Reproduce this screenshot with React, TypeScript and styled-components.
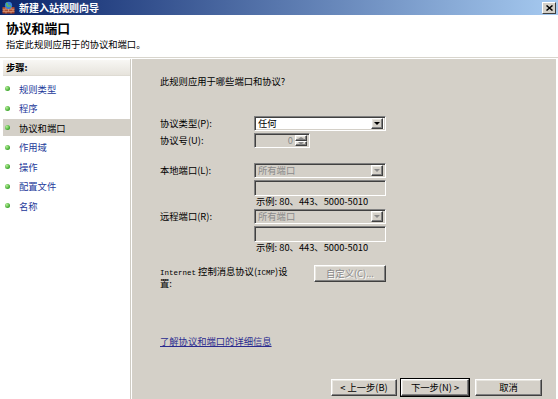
import React from 'react';
import styled, { createGlobalStyle, css } from 'styled-components';

const GlobalStyle = createGlobalStyle`
  html, body {
    margin: 0;
    padding: 0;
    background: #fff;
  }
  body {
    font-family: "Noto Sans CJK SC", "Liberation Sans", sans-serif;
    font-size: 9.3px;
    color: #000;
  }
`;

const Window = styled.div`
  width: 558px;
  height: 399px;
  display: flex;
  flex-direction: column;
  background: #fff;
  overflow: hidden;
`;

const TitleBar = styled.div`
  height: 15px;
  flex: none;
  display: flex;
  align-items: center;
  gap: 4px;
  padding: 0 2px 0 2px;
  background: linear-gradient(to right, #0a246a, #a6caf0);
  color: #fff;
  font-weight: bold;
  font-size: 10px;
  line-height: 15px;
`;

const TitleText = styled.span`
  flex: 1;
`;

const CloseBox = styled.div`
  width: 12px;
  height: 10px;
  background: #d4d0c8;
  border: 1px solid;
  border-color: #fff #404040 #404040 #fff;
  display: flex;
  align-items: center;
  justify-content: center;
`;

const Header = styled.div`
  height: 43px;
  flex: none;
  padding: 5px 6px 0;
  box-sizing: border-box;
  border-bottom: 1px solid #d8d5cd;
`;

const Heading = styled.div`
  font-size: 12.8px;
  font-weight: bold;
  line-height: 15px;
`;

const SubHeading = styled.div`
  margin-top: 4px;
  line-height: 11px;
`;

const Body = styled.div`
  flex: 1;
  display: flex;
  padding-top: 1px;
  min-height: 0;
`;

const StepsPanel = styled.div`
  width: 127px;
  flex: none;
  padding: 1px 0 0 3px;
  border-right: 1px solid #cfccc4;
  margin-right: 1px;
  display: flex;
  flex-direction: column;
`;

const StepsHeader = styled.div`
  height: 15px;
  line-height: 15px;
  padding-left: 3px;
  font-weight: bold;
  background: linear-gradient(to bottom, #f8f7f4, #e6e3dc);
  border-bottom: 1px solid #dedbd3;
`;

const StepList = styled.div`
  padding-top: 4px;
  display: flex;
  flex-direction: column;
  gap: 2.5px;
`;

const StepItem = styled.div<{ $active?: boolean }>`
  height: 17px;
  display: flex;
  align-items: center;
  gap: 9px;
  padding-left: 2px;
  color: ${(p) => (p.$active ? '#000' : '#23399a')};
  background: ${(p) => (p.$active ? '#d4d0c8' : 'transparent')};
`;

const Bullet = styled.span`
  width: 5px;
  height: 5px;
  border-radius: 50%;
  background: radial-gradient(circle at 35% 35%, #b8f09a, #3aa52a 70%);
`;

const MainPanel = styled.div`
  flex: 1;
  background: #d4d0c8;
  margin-right: 2px;
  display: flex;
  flex-direction: column;
  padding: 16px 14px 3px 28px;
`;

const Question = styled.div`
  line-height: 12px;
`;

const FieldRow = styled.div<{ $mt: number }>`
  display: flex;
  align-items: flex-start;
  margin-top: ${(p) => p.$mt}px;
  width: 226px;
`;

const FieldLabel = styled.div`
  width: 94px;
  line-height: 15px;
  flex: none;
`;

const ControlCol = styled.div`
  width: 132px;
  display: flex;
  flex-direction: column;
`;

const sunken = css`
  box-sizing: border-box;
  border: 1px solid;
  border-color: #808080 #fff #fff #808080;
  box-shadow: inset 1px 1px #404040, inset -1px -1px #d4d0c8;
`;

const raised = css`
  box-sizing: border-box;
  border: 1px solid;
  border-color: #fff #404040 #404040 #fff;
  box-shadow: inset -1px -1px #808080, inset 1px 1px #e8e6e0;
  background: #d4d0c8;
`;

const Combo = styled.div<{ $disabled?: boolean }>`
  ${sunken};
  height: 15px;
  width: 132px;
  display: flex;
  align-items: center;
  padding: 2px 2px 2px 3px;
  background: ${(p) => (p.$disabled ? '#d4d0c8' : '#fff')};
  color: ${(p) => (p.$disabled ? '#8a8a8a' : '#000')};
  line-height: 11px;
`;

const ComboText = styled.span`
  flex: 1;
`;

const ComboButton = styled.div`
  ${raised};
  width: 12px;
  height: 11px;
  display: flex;
  align-items: center;
  justify-content: center;
`;

const Arrow = styled.span<{ $disabled?: boolean; $up?: boolean }>`
  width: 0;
  height: 0;
  border-left: 3px solid transparent;
  border-right: 3px solid transparent;
  ${(p) =>
    p.$up
      ? css`border-bottom: 2px solid ${p.$disabled ? '#8a8a8a' : '#000'};`
      : css`border-top: 3px solid ${p.$disabled ? '#8a8a8a' : '#000'};`}
`;

const TextBox = styled.div`
  ${sunken};
  height: 16px;
  width: 132px;
  margin-top: 2px;
  background: #d4d0c8;
`;

const Hint = styled.div`
  line-height: 11px;
  padding-left: 2px;
`;

const Spin = styled.div`
  ${sunken};
  width: 56px;
  height: 15px;
  display: flex;
  align-items: center;
  padding: 2px;
  background: #d4d0c8;
  color: #8a8a8a;
`;

const SpinValue = styled.span`
  flex: 1;
  text-align: right;
  padding-right: 2px;
  line-height: 11px;
`;

const SpinButtons = styled.div`
  display: flex;
  flex-direction: column;
  width: 12px;
  height: 11px;
`;

const SpinHalf = styled.div`
  ${raised};
  flex: 1;
  display: flex;
  align-items: center;
  justify-content: center;
`;

const IcmpRow = styled.div`
  display: flex;
  justify-content: space-between;
  align-items: flex-start;
  width: 226px;
  margin-top: 12px;
`;

const IcmpLabel = styled.div`
  line-height: 10px;
  padding-top: 1px;
`;

const Mono = styled.span`
  font-family: "Liberation Mono", monospace;
  font-size: 7.5px;
`;

const PushButton = styled.div<{ $disabled?: boolean; $default?: boolean; $w: number }>`
  ${raised};
  width: ${(p) => p.$w}px;
  height: 17px;
  display: flex;
  align-items: center;
  justify-content: center;
  line-height: 11px;
  color: ${(p) => (p.$disabled ? '#8a8a8a' : '#000')};
  text-shadow: ${(p) => (p.$disabled ? '1px 1px #fff' : 'none')};
  ${(p) =>
    p.$default &&
    css`
      outline: 1px solid #000;
    `}
`;

const HelpLink = styled.a`
  margin-top: 48px;
  color: #2b2b8f;
  text-decoration: underline;
  line-height: 11px;
  align-self: flex-start;
`;

const ButtonBar = styled.div`
  margin-top: auto;
  display: flex;
  justify-content: flex-end;
  gap: 4px;
`;

const FirewallIcon = () => (
  <svg width="13" height="13" viewBox="0 0 13 13">
    <rect x="0.5" y="6" width="12" height="6.5" fill="#a8452a" />
    <path d="M0.5 8.2h12M0.5 10.4h12M4 6v2.2M9 6v2.2M2 8.2v2.2M6.5 8.2v2.2M11 8.2v2.2M4 10.4v2.1M9 10.4v2.1" stroke="#e8b898" strokeWidth="0.6" />
    <circle cx="6.5" cy="4.3" r="3.6" fill="#3a7fd8" />
    <path d="M4 2.6c1 -0.4 1.6 0.6 1.2 1.4c-0.4 0.8 0.6 1.4 1.4 1c0.8-0.4 1.8 0.2 2 1" stroke="#5fc24a" strokeWidth="1.3" fill="none" />
  </svg>
);

const CloseGlyph = () => (
  <svg width="7" height="6" viewBox="0 0 7 6">
    <path d="M0.5 0.5L6.5 5.5M6.5 0.5L0.5 5.5" stroke="#000" strokeWidth="1.5" />
  </svg>
);

const steps = ['规则类型', '程序', '协议和端口', '作用域', '操作', '配置文件', '名称'];

const ComboBox = ({ text, disabled }: { text: string; disabled?: boolean }) => (
  <Combo $disabled={disabled}>
    <ComboText>{text}</ComboText>
    <ComboButton>
      <Arrow $disabled={disabled} />
    </ComboButton>
  </Combo>
);

export default function App() {
  return (
    <>
      <GlobalStyle />
      <Window>
        <TitleBar>
          <FirewallIcon />
          <TitleText>新建入站规则向导</TitleText>
          <CloseBox>
            <CloseGlyph />
          </CloseBox>
        </TitleBar>
        <Header>
          <Heading>协议和端口</Heading>
          <SubHeading>指定此规则应用于的协议和端口。</SubHeading>
        </Header>
        <Body>
          <StepsPanel>
            <StepsHeader>步骤:</StepsHeader>
            <StepList>
              {steps.map((s) => (
                <StepItem key={s} $active={s === '协议和端口'}>
                  <Bullet />
                  {s}
                </StepItem>
              ))}
            </StepList>
          </StepsPanel>
          <MainPanel>
            <Question>此规则应用于哪些端口和协议?</Question>

            <FieldRow $mt={29}>
              <FieldLabel>协议类型(P):</FieldLabel>
              <ControlCol>
                <ComboBox text="任何" />
              </ControlCol>
            </FieldRow>
            <FieldRow $mt={2}>
              <FieldLabel>协议号(U):</FieldLabel>
              <Spin>
                <SpinValue>0</SpinValue>
                <SpinButtons>
                  <SpinHalf>
                    <Arrow $up $disabled />
                  </SpinHalf>
                  <SpinHalf>
                    <Arrow $disabled />
                  </SpinHalf>
                </SpinButtons>
              </Spin>
            </FieldRow>

            <FieldRow $mt={15}>
              <FieldLabel>本地端口(L):</FieldLabel>
              <ControlCol>
                <ComboBox text="所有端口" disabled />
                <TextBox />
                <Hint>示例: 80、443、5000-5010</Hint>
              </ControlCol>
            </FieldRow>

            <FieldRow $mt={2}>
              <FieldLabel>远程端口(R):</FieldLabel>
              <ControlCol>
                <ComboBox text="所有端口" disabled />
                <TextBox />
                <Hint>示例: 80、443、5000-5010</Hint>
              </ControlCol>
            </FieldRow>

            <IcmpRow>
              <IcmpLabel>
                <Mono>Internet</Mono> 控制消息协议(<Mono>ICMP</Mono>)设
                <br />
                置:
              </IcmpLabel>
              <PushButton $w={72} $disabled>
                自定义(C)...
              </PushButton>
            </IcmpRow>

            <HelpLink>了解协议和端口的详细信息</HelpLink>

            <ButtonBar>
              <PushButton $w={66}>&lt; 上一步(B)</PushButton>
              <PushButton $w={68} $default>
                下一步(N) &gt;
              </PushButton>
              <PushButton $w={67} style={{ marginLeft: 2 }}>
                取消
              </PushButton>
            </ButtonBar>
          </MainPanel>
        </Body>
      </Window>
    </>
  );
}
